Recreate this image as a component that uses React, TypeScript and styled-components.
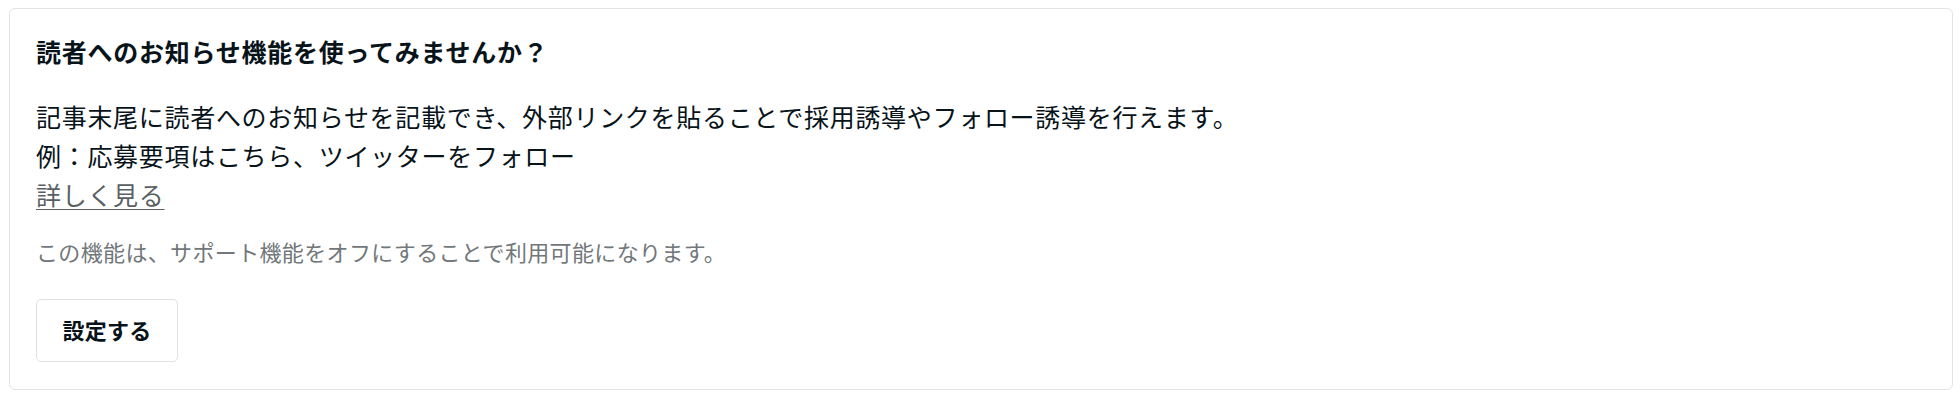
import React from "react";
import styled, { createGlobalStyle } from "styled-components";

const GlobalStyle = createGlobalStyle`
  html, body {
    margin: 0;
    padding: 0;
    background: #ffffff;
  }
  body {
    font-family: "Noto Sans CJK JP", "Noto Sans", sans-serif;
    color: #08131a;
  }
`;

const Page = styled.div`
  padding: 8px 7px 0 9px;
`;

const Card = styled.section`
  border: 1px solid #e1e3e4;
  border-radius: 6px;
  background: #fff;
  padding: 22px 26px 27px 26px;
  display: flex;
  flex-direction: column;
  align-items: flex-start;
`;

const Title = styled.h2`
  margin: 0;
  font-size: 25px;
  line-height: 40px;
  font-weight: 700;
  letter-spacing: 0.75px;
  color: #08131a;
`;

const Body = styled.div`
  margin-top: 26px;
  font-size: 25px;
  line-height: 38.75px;
  letter-spacing: 0.7px;
  color: #08131a;
`;

const Line = styled.p`
  margin: 0;
`;

const MoreLink = styled.a`
  color: #5a5f63;
  text-decoration: underline;
  text-underline-offset: 4px;
  text-decoration-thickness: 1px;
  cursor: pointer;
`;

const Note = styled.p`
  margin: 22px 0 0;
  font-size: 22px;
  line-height: 33px;
  letter-spacing: 0.35px;
  color: #71777a;
`;

const Button = styled.button`
  margin-top: 31px;
  height: 63px;
  width: 142px;
  border: 1px solid #dfe1e3;
  border-radius: 5px;
  background: #fff;
  font-family: "Noto Sans CJK JP", "Noto Sans", sans-serif;
  font-size: 22px;
  font-weight: 700;
  letter-spacing: 0.3px;
  color: #08131a;
  cursor: pointer;
  padding: 0 0 3px;
`;

export default function App() {
  return (
    <>
      <GlobalStyle />
      <Page>
        <Card>
          <Title>読者へのお知らせ機能を使ってみませんか？</Title>
          <Body>
            <Line>
              記事末尾に読者へのお知らせを記載でき、外部リンクを貼ることで採用誘導やフォロー誘導を行えます。
            </Line>
            <Line>例：応募要項はこちら、ツイッターをフォロー</Line>
            <Line>
              <MoreLink>詳しく見る</MoreLink>
            </Line>
          </Body>
          <Note>この機能は、サポート機能をオフにすることで利用可能になります。</Note>
          <Button>設定する</Button>
        </Card>
      </Page>
    </>
  );
}
